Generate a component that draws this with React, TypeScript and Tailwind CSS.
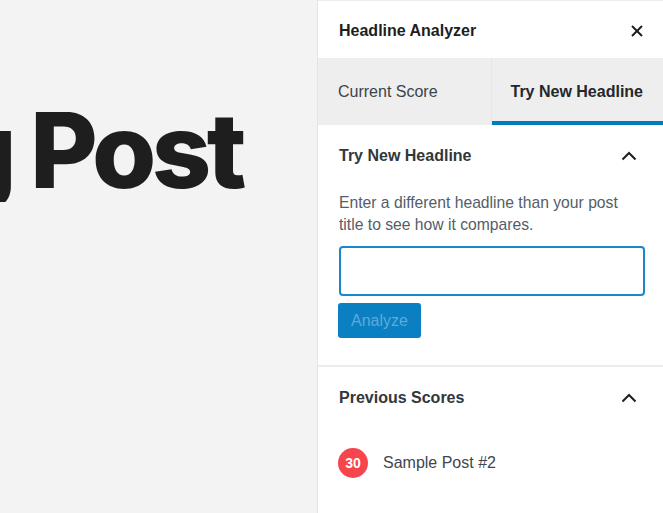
import React from "react";

function CloseIcon() {
  return (
    <svg width="12" height="12" viewBox="0 0 12 12" fill="none" stroke="#1e1e1e" strokeWidth="2" strokeLinecap="butt">
      <line x1="1" y1="1" x2="11" y2="11" />
      <line x1="11" y1="1" x2="1" y2="11" />
    </svg>
  );
}

function ChevronUp() {
  return (
    <svg width="16" height="10" viewBox="0 0 16 10" fill="none" stroke="#1e1e1e" strokeWidth="2" className="mr-[8px]">
      <polyline points="1.5,8.5 8,2 14.5,8.5" />
    </svg>
  );
}

export default function App() {
  return (
    <div className="w-[663px] h-[513px] flex overflow-hidden" style={{ fontFamily: '"Liberation Sans", Arial, sans-serif' }}>
      {/* Editor canvas */}
      <div className="flex-1 min-w-0 bg-[#f3f3f3] overflow-hidden">
        <div
          className="flex items-baseline whitespace-nowrap pt-[98px] text-[104px] leading-none font-extrabold text-[#1e1e1e] tracking-[-0.045em]"
          style={{ fontFamily: 'Inter, "Liberation Sans", sans-serif' }}
        >
          <div className="w-[12px] shrink-0 overflow-hidden flex justify-end">
            <span>Blog</span>
          </div>
          <span className="ml-[18px]">Post</span>
        </div>
      </div>

      {/* Sidebar */}
      <div className="w-[346px] shrink-0 border-l border-[#e2e4e7] bg-white flex flex-col">
        <div className="h-[58px] flex items-center justify-between pl-[21px] pr-[20px] pt-[3px] border-t border-[#ececec]">
          <span className="text-[16px] font-bold text-[#1e1e1e]">Headline Analyzer</span>
          <CloseIcon />
        </div>

        <div className="h-[67px] flex bg-[#eeeeee]">
          <div className="w-1/2 flex items-center pl-[20px] text-[16px] text-[#3c434a]">Current Score</div>
          <div className="w-1/2 flex items-center pl-[19px] text-[16px] font-bold text-[#23282d] border-l border-[#e6e6e6] shadow-[inset_0_-4px_0_#007cba]">
            Try New Headline
          </div>
        </div>

        <div className="pl-[21px] pr-[18px] pt-[19px] pb-[27px] border-b-2 border-[#ececec]">
          <div className="h-[24px] flex items-center justify-between">
            <span className="text-[16px] font-bold text-[#32373c]">Try New Headline</span>
            <ChevronUp />
          </div>
          <p className="mt-[24px] text-[15.7px] leading-[22px] text-[#555d66]">
            Enter a different headline than your post title to see how it compares.
          </p>
          <input
            type="text"
            className="mt-[10px] block w-full h-[50px] rounded-[4px] border-2 border-[#1a87cc] outline-none px-2"
          />
          <button className="mt-[7px] -ml-[1px] w-[83px] h-[35px] rounded-[3px] bg-[#0a7fc2] text-[16px] text-[#5eaad8]">
            Analyze
          </button>
        </div>

        <div className="pl-[21px] pr-[18px] pt-[19px] flex-1">
          <div className="h-[24px] flex items-center justify-between">
            <span className="text-[16px] font-bold text-[#32373c]">Previous Scores</span>
            <ChevronUp />
          </div>
          <div className="mt-[38px] flex items-center">
            <div className="-ml-[1px] w-[30px] h-[30px] rounded-full bg-[#f6454c] flex items-center justify-center text-white text-[14px] font-bold">
              30
            </div>
            <span className="ml-[15px] text-[16px] text-[#40464d]">Sample Post #2</span>
          </div>
        </div>
      </div>
    </div>
  );
}
